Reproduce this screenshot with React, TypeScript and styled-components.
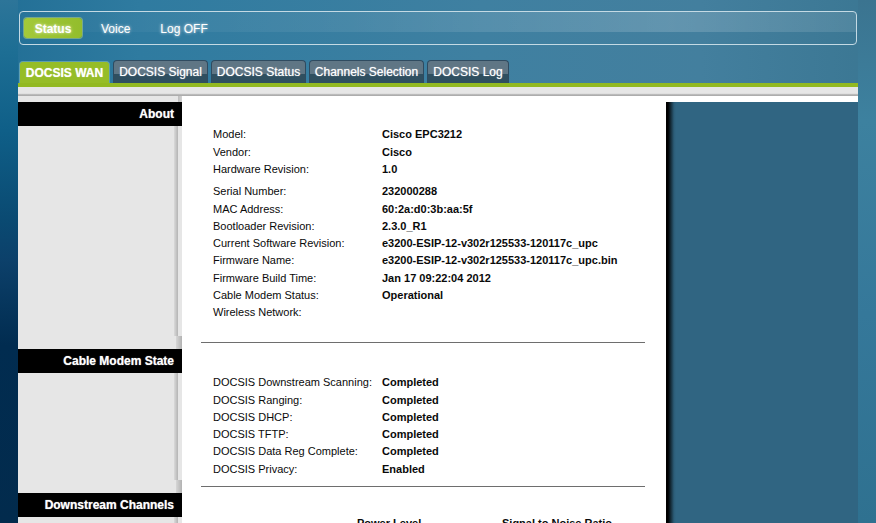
import React from "react";
import styled, { createGlobalStyle } from "styled-components";

const GlobalStyle = createGlobalStyle`
  html, body {
    margin: 0;
    height: 523px;
    overflow: hidden;
    font-family: "Liberation Sans", Arial, sans-serif;
  }
`;

const Page = styled.div`
  width: 876px;
  height: 523px;
  overflow: hidden;
  box-sizing: border-box;
  padding: 11px 18px 0;
  background:
    linear-gradient(
        180deg,
        #2d7599 0%,
        #1d6e94 10%,
        #0f5f88 25%,
        #0a4a72 42%,
        #0c406a 50%,
        #012c50 66%,
        #022b4d 100%
      )
      left / 18px 100% no-repeat,
    linear-gradient(180deg, #3b7490 0%, #3d819f 23%, #35789a 60%, #2f7190 100%) right / 18px 100%
      no-repeat,
    linear-gradient(90deg, #226f96 0%, #2f7ba0 16%, #3f80a1 55%, #437f9e 80%, #3b7793 100%);
`;

const NavBar = styled.nav`
  position: relative;
  box-sizing: border-box;
  width: 838px;
  height: 34px;
  margin-left: 1px;
  padding: 6px 4px;
  display: flex;
  align-items: flex-start;
  border: 1px solid #c4dae4;
  border-radius: 4px;
  background: linear-gradient(
      90deg,
      rgba(255, 255, 255, 0.02) 0%,
      rgba(255, 255, 255, 0.08) 40%,
      rgba(255, 255, 255, 0.17) 78%,
      rgba(255, 255, 255, 0.1) 100%
    )
    top / 100% 20px no-repeat;
`;

const NavItem = styled.a<{ $active?: boolean }>`
  box-sizing: border-box;
  height: 20px;
  line-height: 22px;
  border-radius: 3px;
  font-size: 12px;
  color: #fff;
  text-shadow: 0 0 3px rgba(255, 255, 255, 0.85);
  font-weight: ${(p) => (p.$active ? "bold" : "normal")};
  width: ${(p) => (p.$active ? "58px" : "auto")};
  text-align: center;
  margin-right: ${(p) => (p.$active ? "19px" : "30px")};
  background: ${(p) =>
    p.$active ? "linear-gradient(90deg, #a3c93a 0%, #93bd2c 100%)" : "none"};
  box-shadow: ${(p) => (p.$active ? "0 0 0 1px rgba(190, 215, 130, 0.5)" : "none")};
`;

const TabRow = styled.div`
  display: flex;
  align-items: flex-end;
  gap: 3px;
  margin-top: 15px;
  margin-left: 1px;
  height: 23px;
`;

const Tab = styled.a<{ $active?: boolean; $width: number }>`
  box-sizing: border-box;
  width: ${(p) => p.$width}px;
  height: ${(p) => (p.$active ? "22px" : "23px")};
  line-height: ${(p) => (p.$active ? "22px" : "23px")};
  text-align: center;
  font-size: 12px;
  white-space: nowrap;
  color: #fff;
  font-weight: ${(p) => (p.$active ? "bold" : "normal")};
  text-shadow: 0 0 1px rgba(255, 255, 255, 0.7);
  border-radius: 4px 4px 0 0;
  border: 1px solid ${(p) => (p.$active ? "#5f9fb0" : "#2f4b60")};
  border-bottom: none;
  background: ${(p) =>
    p.$active
      ? "#96bd27"
      : "linear-gradient(180deg, #5f7685 0%, #5f7685 58%, #2f4f60 58%, #2f4f60 100%)"};
`;

const Frame = styled.div`
  width: 840px;
`;

const GreenBar = styled.div`
  height: 4px;
  background: #92b921;
`;

const GreyBand = styled.div`
  height: 9px;
  background: linear-gradient(180deg, #e6e6e6 0%, #e6e6e6 70%, #b5b5b5 85%, #a8a8a8 100%);
`;

const Main = styled.div`
  display: flex;
  height: 430px;
  background: #fff;
`;

const Sidebar = styled.aside`
  width: 164px;
  flex: none;
  background: #e6e6e6;
`;

const SideTop = styled.div`
  height: 6px;
  margin-left: 160px;
  background: linear-gradient(90deg, #bdbdbd, #d2d2d2);
`;

const SideHeading = styled.h3`
  margin: 0;
  height: 24px;
  line-height: 24px;
  padding-right: 8px;
  text-align: right;
  font-size: 12px;
  font-weight: bold;
  color: #fff;
  background: #000;
  text-shadow: 0 0 1px rgba(255, 255, 255, 0.7);
`;

const SideBody = styled.div<{ $height: number }>`
  height: ${(p) => p.$height}px;
  display: flex;
  flex-direction: column;
  align-items: flex-end;
`;

const SideStrip = styled.div`
  flex: 1;
  width: 4px;
  margin-right: 4px;
  background: linear-gradient(90deg, #dadada, #b4b4b4);
`;

const SideTail = styled.div`
  height: 13px;
  width: 6px;
  background: linear-gradient(90deg, #d6d6d6, #b2b2b2);
`;

const Panel = styled.section`
  width: 484px;
  flex: none;
  box-sizing: border-box;
  padding: 30.4px 21px 0 19px;
  background: #fff;
  font-size: 11px;
  color: #0a0a0a;
`;

const InfoGroup = styled.div<{ $pad?: number }>`
  display: grid;
  grid-template-columns: 169px 1fr;
  grid-auto-rows: 17.3px;
  line-height: 17.3px;
  padding-left: 12px;
  margin-bottom: ${(p) => p.$pad ?? 0}px;
`;

const Label = styled.span`
  white-space: nowrap;
`;

const Value = styled.span`
  font-weight: bold;
  white-space: nowrap;
`;

const Rule = styled.hr<{ $after: number }>`
  margin: 0 0 ${(p) => p.$after}px;
  border: none;
  height: 1px;
  background: #6e6e6e;
`;

const ChannelHead = styled.div`
  display: flex;
  font-size: 11px;
  font-weight: bold;
  line-height: 17px;
  padding-left: 156px;
  white-space: nowrap;
`;

const ChannelCol = styled.span<{ $width: number }>`
  width: ${(p) => p.$width}px;
`;

const RightPane = styled.div`
  flex: 1;
  margin-top: 6px;
  background: linear-gradient(90deg, #000 0%, #000 2px, #2c5d78 8px, #306582 10px, #306582 100%);
`;

const device: [string, string][] = [
  ["Model:", "Cisco EPC3212"],
  ["Vendor:", "Cisco"],
  ["Hardware Revision:", "1.0"],
];

const firmware: [string, string][] = [
  ["Serial Number:", "232000288"],
  ["MAC Address:", "60:2a:d0:3b:aa:5f"],
  ["Bootloader Revision:", "2.3.0_R1"],
  ["Current Software Revision:", "e3200-ESIP-12-v302r125533-120117c_upc"],
  ["Firmware Name:", "e3200-ESIP-12-v302r125533-120117c_upc.bin"],
  ["Firmware Build Time:", "Jan 17 09:22:04 2012"],
  ["Cable Modem Status:", "Operational"],
  ["Wireless Network:", ""],
];

const modemState: [string, string][] = [
  ["DOCSIS Downstream Scanning:", "Completed"],
  ["DOCSIS Ranging:", "Completed"],
  ["DOCSIS DHCP:", "Completed"],
  ["DOCSIS TFTP:", "Completed"],
  ["DOCSIS Data Reg Complete:", "Completed"],
  ["DOCSIS Privacy:", "Enabled"],
];

const tabs = [
  { label: "DOCSIS Signal", width: 95 },
  { label: "DOCSIS Status", width: 95 },
  { label: "Channels Selection", width: 115 },
  { label: "DOCSIS Log", width: 82 },
];

function Rows({ rows }: { rows: [string, string][] }) {
  return (
    <>
      {rows.map(([label, value]) => (
        <React.Fragment key={label}>
          <Label>{label}</Label>
          <Value>{value}</Value>
        </React.Fragment>
      ))}
    </>
  );
}

export default function App() {
  return (
    <Page>
      <GlobalStyle />
      <NavBar>
        <NavItem $active>Status</NavItem>
        <NavItem>Voice</NavItem>
        <NavItem>Log OFF</NavItem>
      </NavBar>
      <TabRow>
        <Tab $active $width={91}>
          DOCSIS WAN
        </Tab>
        {tabs.map((t) => (
          <Tab key={t.label} $width={t.width}>
            {t.label}
          </Tab>
        ))}
      </TabRow>
      <Frame>
        <GreenBar />
        <GreyBand />
        <Main>
          <Sidebar>
            <SideTop />
            <SideHeading>About</SideHeading>
            <SideBody $height={223}>
              <SideStrip />
              <SideTail />
            </SideBody>
            <SideHeading>Cable Modem State</SideHeading>
            <SideBody $height={120}>
              <SideStrip />
              <SideTail />
            </SideBody>
            <SideHeading>Downstream Channels</SideHeading>
            <SideBody $height={40}>
              <SideStrip />
            </SideBody>
          </Sidebar>
          <Panel>
            <InfoGroup $pad={5}>
              <Rows rows={device} />
            </InfoGroup>
            <InfoGroup $pad={20}>
              <Rows rows={firmware} />
            </InfoGroup>
            <Rule $after={31.6} />
            <InfoGroup $pad={8}>
              <Rows rows={modemState} />
            </InfoGroup>
            <Rule $after={28} />
            <ChannelHead>
              <ChannelCol $width={145}>Power Level</ChannelCol>
              <ChannelCol $width={120}>Signal to Noise Ratio</ChannelCol>
            </ChannelHead>
          </Panel>
          <RightPane />
        </Main>
      </Frame>
    </Page>
  );
}
